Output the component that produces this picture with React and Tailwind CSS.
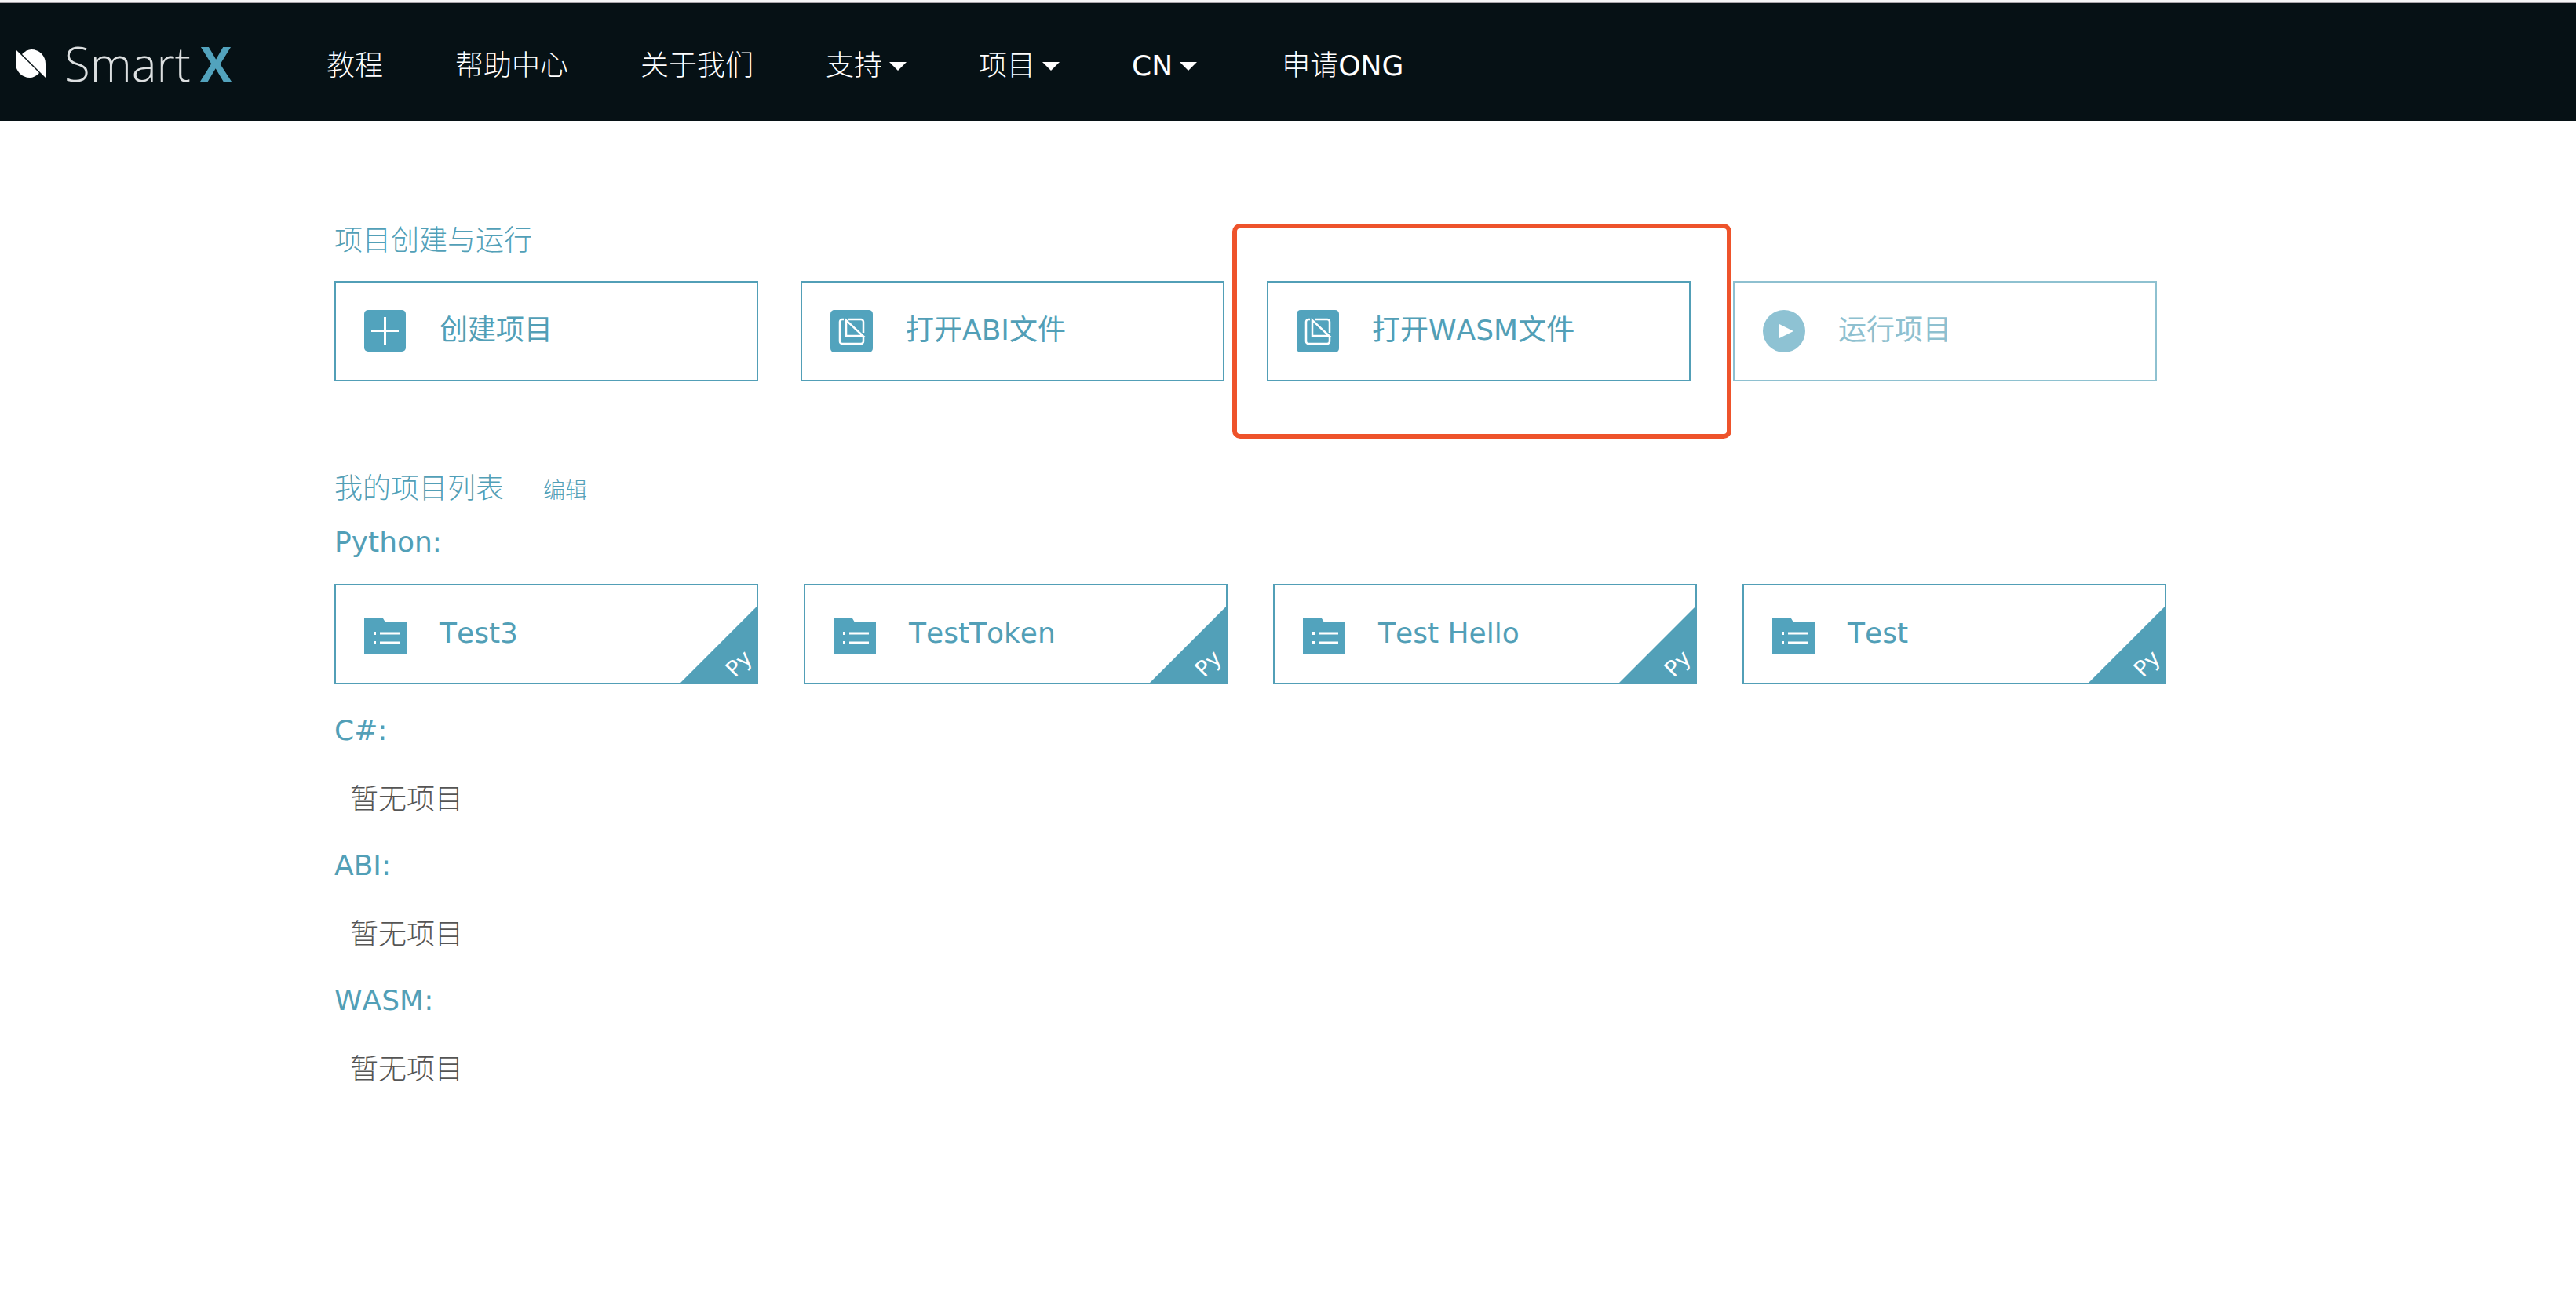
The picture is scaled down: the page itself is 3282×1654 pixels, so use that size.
const FONT = "font-['DejaVu_Sans','Noto_Sans_CJK_SC',sans-serif] [font-kerning:none]";

function Caret() {
  return (
    <svg viewBox="0 0 22 11" className="ml-[9px] h-[11px] w-[22px] fill-current" aria-hidden="true">
      <path d="M0 0h22L11 11z" />
    </svg>
  );
}

function Logo() {
  return (
    <a href="#home" className="flex w-[416px] shrink-0 items-center pl-5" aria-label="SmartX">
      <svg viewBox="0 0 38 36" className="mt-1 h-[36px] w-[38px] fill-white" aria-hidden="true">
        <path d="M0 0L30 30C26 34 22 36 18 36C8 36 0 28 0 18z" />
        <path d="M8 6C12 2 16 0 20 0C30 0 38 8 38 18V36z" />
      </svg>
      <span className="ml-6 pt-1 font-['Open_Sans','Noto_Sans',sans-serif] text-[60px] leading-[80px] font-light text-[#dcdfe0]">
        Smart
      </span>
      <span className="ml-3 pt-1 font-['Open_Sans','Noto_Sans',sans-serif] text-[60px] leading-[80px] font-bold text-[#52a3bd]">
        X
      </span>
    </a>
  );
}

function PlusIcon() {
  return (
    <svg viewBox="0 0 54 54" className="size-[54px] shrink-0" fill="none" aria-hidden="true">
      <rect width="53" height="53" rx="5" fill="#52a3bd" />
      <path d="M26.500 9v35M9 26.500h35" stroke="#fff" strokeWidth="3" />
    </svg>
  );
}

function FileIcon() {
  return (
    <svg viewBox="0 0 54 54" className="size-[54px] shrink-0" fill="none" aria-hidden="true">
      <rect width="54" height="54" rx="5" fill="#52a3bd" />
      <path
        d="M17 12h-2a3 3 0 0 0-3 3v25a3 3 0 0 0 3 3h24a3 3 0 0 0 3-3v-5M23 12h16a3 3 0 0 1 3 3v14M20 13v20h21.500z"
        stroke="#fff"
        strokeWidth="2.500"
      />
    </svg>
  );
}

function PlayIcon() {
  return (
    <svg viewBox="0 0 54 54" className="size-[54px] shrink-0" aria-hidden="true">
      <circle cx="27" cy="27" r="27" fill="#52a3bd" />
      <path d="M20 17.500L39 27L20 36.500z" fill="#fff" />
    </svg>
  );
}

function FolderIcon() {
  return (
    <svg viewBox="0 0 54 54" className="size-[54px] shrink-0" aria-hidden="true">
      <path d="M0 7h24l3 5h27v41H0z" fill="#52a3bd" />
      <path d="M12 24h3v4h-3zM20 24.500h25v3H20zM12 36h3v4h-3zM20 36.500h25v3H20z" fill="#fff" />
    </svg>
  );
}

const NAV = [
  { label: "教程" },
  { label: "帮助中心" },
  { label: "关于我们" },
  { label: "支持", menu: true },
  { label: "项目", menu: true },
];

const ACTIONS = [
  { label: "创建项目", Icon: PlusIcon },
  { label: "打开ABI文件", Icon: FileIcon },
  { label: "打开WASM文件", Icon: FileIcon, highlighted: true },
  { label: "运行项目", Icon: PlayIcon, disabled: true },
];

const PROJECTS = ["Test3", "TestToken", "Test Hello", "Test"];
const EMPTY_GROUPS = ["C#:", "ABI:", "WASM:"];

function Header() {
  return (
    <header className="flex min-h-[150px] items-center bg-[#061115] text-white">
      <Logo />
      <nav className="flex items-center gap-[92px] pt-2.5 leading-[54px]">
        {NAV.map(({ label, menu }) =>
          menu ? (
            <button key={label} type="button" className="flex items-center font-light" aria-haspopup="menu">
              {label}
              <Caret />
            </button>
          ) : (
            <a key={label} href="#nav" className="font-light">
              {label}
            </a>
          )
        )}
        <button type="button" className="flex items-center" aria-haspopup="menu">
          CN
          <Caret />
        </button>
        <a href="#ong" className="ml-4">
          <span className="font-light">申请</span>ONG
        </a>
      </nav>
    </header>
  );
}

function ActionCard({ label, Icon, highlighted, disabled }) {
  return (
    <div className="relative">
      <button
        type="button"
        disabled={disabled}
        className="flex h-32 w-full items-center border-2 border-current pl-9 disabled:opacity-65"
      >
        <Icon />
        <span className="ml-[42px] pb-0.5">{label}</span>
      </button>
      {highlighted && (
        <div className="pointer-events-none absolute -top-[73px] -right-[52px] -bottom-[73px] -left-[44px] rounded-[10px] border-6 border-[#ee532b]" />
      )}
    </div>
  );
}

function ProjectCard({ name }) {
  return (
    <button type="button" className="relative flex h-32 w-full items-center border-2 border-current pl-9">
      <FolderIcon />
      <span className="ml-[42px] pb-0.5">{name}</span>
      <span className="absolute right-0 bottom-0 size-[97px] bg-[#52a0b8] [clip-path:polygon(100%_0,100%_100%,0_100%)]">
        <span className="absolute right-1.5 bottom-2 -rotate-45 text-[28px] leading-8 text-white">Py</span>
      </span>
    </button>
  );
}

export default function App() {
  return (
    <div className={`min-h-screen bg-white text-[36px] leading-[54px] text-[#529fb7] ${FONT}`}>
      <div className="h-1 border-b border-[#a9a5aa] bg-[#f6f6f7]" />
      <Header />
      <main className="pt-[126px] pr-10 pb-10 pl-[426px]">
        <section>
          <h2 className="font-light">项目创建与运行</h2>
          <div className="mt-6 grid max-w-[2322px] grid-cols-4 gap-[54px]">
            {ACTIONS.map((action) => (
              <ActionCard key={action.label} {...action} />
            ))}
          </div>
        </section>
        <section className="mt-[110px]">
          <div className="flex items-baseline gap-[50px]">
            <h2 className="font-light">我的项目列表</h2>
            <button type="button" className="text-[28px] leading-10 font-light">
              编辑
            </button>
          </div>
          <h3 className="mt-3.5">Python:</h3>
          <div className="mt-[26px] mb-8 grid max-w-[2334px] grid-cols-4 gap-[58px]">
            {PROJECTS.map((name) => (
              <ProjectCard key={name} name={name} />
            ))}
          </div>
          {EMPTY_GROUPS.map((group) => (
            <div key={group} className="mb-[30px]">
              <h3>{group}</h3>
              <p className="mt-[34px] pl-5 font-light text-[#555555]">暂无项目</p>
            </div>
          ))}
        </section>
      </main>
    </div>
  );
}
